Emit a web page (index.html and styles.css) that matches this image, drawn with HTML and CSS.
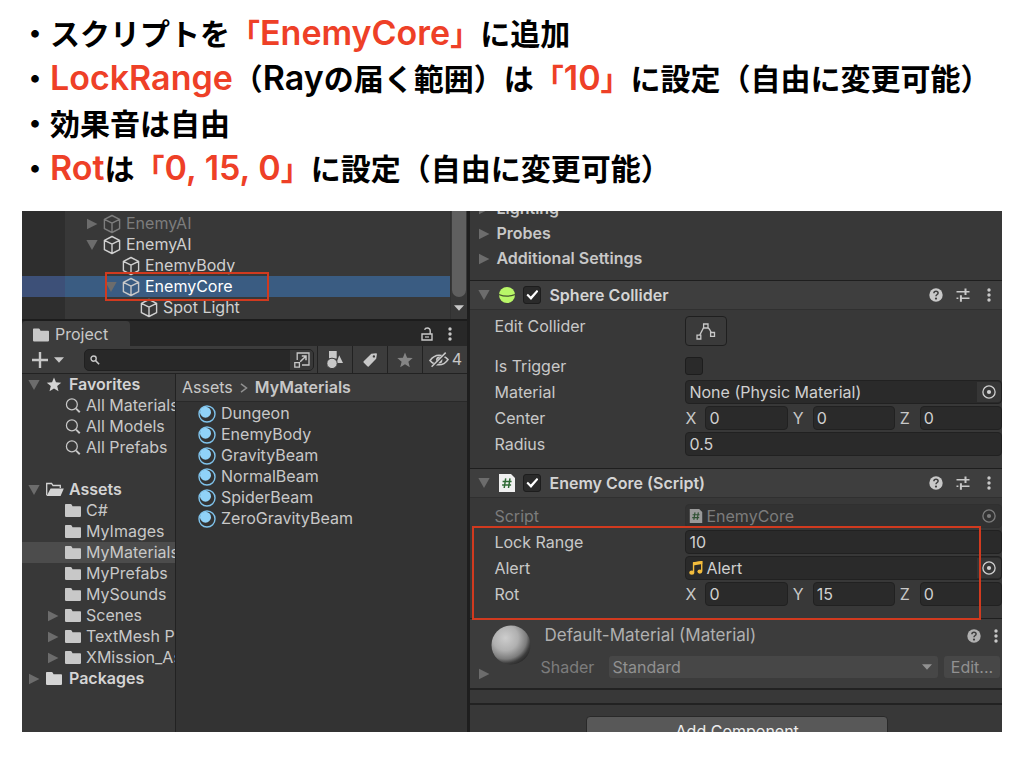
FILE: index.html
```html
<!DOCTYPE html>
<html lang="ja">
<head>
<meta charset="utf-8">
<title>EnemyCore の設定</title>
<link rel="stylesheet" href="styles.css">
</head>
<body>
<svg class="symbols" aria-hidden="true">
  <symbol id="cube" viewBox="0 0 18 20"><path d="M9 1.5 16.6 5.3V14.7L9 18.5 1.4 14.7V5.3ZM1.4 5.3 9 9.2 16.6 5.3M9 9.2V18.5" fill="none" stroke="currentColor" stroke-width="1.4" stroke-linejoin="round"/></symbol>
  <symbol id="right" viewBox="0 0 12 12"><path d="M1 .8 11.4 6 1 11.2Z" fill="currentColor"/></symbol>
  <symbol id="down" viewBox="0 0 12 12"><path d="M.4 1H11.6L6 11Z" fill="currentColor"/></symbol>
  <symbol id="caret" viewBox="0 0 10 6"><path d="M0 .3H10L5 5.8Z" fill="currentColor"/></symbol>
  <symbol id="folder" viewBox="0 0 16 14"><path d="M0 1.2Q0 .4.8.4H5.6Q6.4.4 6.8 1.2L7.5 2.8H15.2Q16 2.8 16 3.6V12.6Q16 13.4 15.2 13.4H.8Q0 13.4 0 12.6Z" fill="currentColor"/></symbol>
  <symbol id="folder-open" viewBox="0 0 18 14"><path d="M.7 12.7V1H5.6L7 3H14.3V5.6" fill="none" stroke="currentColor" stroke-width="1.3"/><path d="M4.6 6H17.8L14.6 13.4H.6Z" fill="currentColor"/></symbol>
  <symbol id="star" viewBox="0 0 16 16"><path d="M8 .6 10.1 5.7 15.7 6.1 11.4 9.7 12.8 15.2 8 12.2 3.2 15.2 4.6 9.7.3 6.1 5.9 5.7Z" fill="currentColor"/></symbol>
  <symbol id="search" viewBox="0 0 16 16"><circle cx="6.8" cy="6.8" r="5.8" fill="none" stroke="currentColor" stroke-width="1.3"/><path d="m11.3 11.3 3.9 3.9" stroke="currentColor" stroke-width="2"/></symbol>
  <symbol id="find" viewBox="0 0 10 10"><circle cx="3.6" cy="3.6" r="2.6" fill="none" stroke="currentColor" stroke-width="1.4"/><path d="m5.5 5.5 3.6 3.7" stroke="currentColor" stroke-width="1.6"/></symbol>
  <symbol id="material" viewBox="0 0 18 18"><circle cx="9" cy="9" r="8" fill="none" stroke="#7fc3ec" stroke-width="1.4"/><circle cx="7.5" cy="7.2" r="5.5" fill="#90d2f8"/></symbol>
  <symbol id="plus" viewBox="0 0 16 16"><path d="M8 0V16M0 8H16" stroke="currentColor" stroke-width="2.4"/></symbol>
  <symbol id="open-in" viewBox="0 0 16 16"><path d="M3.2 8V1H15V13H8" fill="none" stroke="currentColor" stroke-width="1.3"/><path d="M.8 10.7H5.4V15.2H.8Z" fill="none" stroke="currentColor" stroke-width="1.3"/><path d="M6.2 9.7 12 4M7.8 4H12V8.2" fill="none" stroke="currentColor" stroke-width="1.5"/></symbol>
  <symbol id="shapes" viewBox="0 0 16 18"><path d="M2 0H9.7V7.4H2ZM12.2 4.3 16 12H9.5Z" fill="currentColor"/><circle cx="5" cy="12.4" r="5.2" fill="currentColor" stroke="#3c3c3c"/></symbol>
  <symbol id="tag" viewBox="0 0 14 14"><path fill-rule="evenodd" d="M8.3.7 13.2.3Q14 .4 13.9 1.2L13.2 5.8 5.7 13.5Q5 14 4.3 13.3L.6 9.6Q0 8.9.7 8.2ZM10.9 2.2A1.2 1.2 0 1 0 10.9 4.6 1.2 1.2 0 1 0 10.9 2.2Z" fill="currentColor"/></symbol>
  <symbol id="hidden" viewBox="0 0 20 16"><path d="M1 8.4Q5 3.2 10 3.2T19 7.6Q15.5 12.8 10 12.8T1 8.4Z" fill="none" stroke="currentColor" stroke-width="1.6"/><ellipse cx="10.2" cy="8" rx="3.2" ry="3.6" fill="currentColor"/><path d="M3.2 15.4 17.3.8" stroke="#3c3c3c" stroke-width="3"/><path d="M2.6 14.7 16.7.6" stroke="currentColor" stroke-width="1.5"/></symbol>
  <symbol id="lock" viewBox="0 0 12 14"><path d="M1 7H11V13H1ZM9.2 7V3.7Q9.2 1 6.3 1 4.2 1 3.6 2.8" fill="none" stroke="currentColor" stroke-width="1.4"/><path d="M4 10H8" stroke="currentColor" stroke-width="1.2"/></symbol>
  <symbol id="dots" viewBox="0 0 4 14"><circle cx="2" cy="2" r="1.7" fill="currentColor"/><circle cx="2" cy="7" r="1.7" fill="currentColor"/><circle cx="2" cy="12" r="1.7" fill="currentColor"/></symbol>
  <symbol id="help" viewBox="0 0 14 14"><circle cx="7" cy="7" r="6.7" fill="currentColor"/><path d="M4.9 5.2Q4.9 3.2 7 3.2T9.1 5.1Q9.1 6.1 8 6.7 7 7.2 7 8.3" fill="none" stroke="#3e3e3e" stroke-width="1.5"/><circle cx="7" cy="10.6" r="1.1" fill="#3e3e3e"/></symbol>
  <symbol id="sliders" viewBox="0 0 14 14"><path d="M.5 3.7H8M11 3.7H13.5M.5 10.2H2.4M5 10.2H13.5M8 3.7H11" stroke="currentColor" stroke-width="1.5"/><path d="M9.5.5V7M4.9 7.2V13.7" stroke="currentColor" stroke-width="2"/></symbol>
  <symbol id="picker" viewBox="0 0 14 14"><circle cx="7" cy="7" r="6.1" fill="none" stroke="currentColor" stroke-width="1.3"/><circle cx="7" cy="7" r="2.1" fill="currentColor"/></symbol>
  <symbol id="sphere" viewBox="0 0 16 16"><circle cx="8" cy="8" r="8" fill="#b9f768"/><path d="M0 7.6Q8 10.8 16 7.6" fill="none" stroke="#44532f" stroke-width="1.2"/></symbol>
  <symbol id="script" viewBox="0 0 16 18"><path d="M0 0H12L16 4V18H0Z" fill="#f0f0f0"/><path d="M6.7 4.3 5.2 14M11 4.3 9.5 14M3.6 7.4H12.6M3.1 11H12.1" stroke="#2f6b35" stroke-width="1.5"/></symbol>
  <symbol id="edit-shape" viewBox="0 0 20 17"><path d="M3.8 12 7.5 4.7M12.2 4.7Q14 6.2 15.3 9.8" fill="none" stroke="currentColor" stroke-width="1.4"/><path d="M1 12.2H4.8V16H1ZM7.6 1H12V5H7.6ZM14.6 9.5H18.5V13.4H14.6Z" fill="none" stroke="currentColor" stroke-width="1.3"/></symbol>
  <symbol id="note" viewBox="0 0 12 12"><path d="M3.9 9.7V1.6L10.9.6V8.5" fill="none" stroke="#f4bd3c" stroke-width="1.2"/><path d="M3.5 1.2 11.4.1V2.6L3.5 3.8Z" fill="#f4bd3c"/><ellipse cx="2.4" cy="10" rx="2.2" ry="1.8" fill="#f4bd3c"/><ellipse cx="9.3" cy="9.1" rx="2.1" ry="1.8" fill="#f4bd3c"/></symbol>
</svg>

<ul class="notes">
  <li>・スクリプトを<em>「<span class="latin">EnemyCore</span>」</em>に追加</li>
  <li>・<em class="latin">LockRange</em>（<span class="latin">Ray</span>の届く範囲）は<em>「<span class="latin">10</span>」</em>に設定（自由に変更可能）</li>
  <li>・効果音は自由</li>
  <li>・<em class="latin">Rot</em>は<em>「<span class="latin">0, 15, 0</span>」</em>に設定（自由に変更可能）</li>
</ul>

<main class="editor">
  <div class="left">
    <section class="hierarchy">
      <ul class="nodes">
        <li class="node dim"><svg class="arrow"><use href="#right"/></svg><svg class="cube"><use href="#cube"/></svg>EnemyAI</li>
        <li class="node"><svg class="arrow"><use href="#down"/></svg><svg class="cube"><use href="#cube"/></svg>EnemyAI</li>
        <li class="node level-2"><span class="arrow"></span><svg class="cube"><use href="#cube"/></svg>EnemyBody</li>
        <li class="node level-2 selected"><svg class="arrow"><use href="#down"/></svg><svg class="cube"><use href="#cube"/></svg>EnemyCore<span class="mark mark-node"></span></li>
        <li class="node level-3"><span class="arrow"></span><svg class="cube"><use href="#cube"/></svg>Spot Light</li>
      </ul>
      <div class="scroll"><div class="thumb"></div><svg class="caret"><use href="#caret"/></svg></div>
    </section>

    <section class="project">
      <div class="tabs">
        <div class="tab"><svg class="folder"><use href="#folder"/></svg>Project</div>
        <svg class="lock"><use href="#lock"/></svg><svg class="dots"><use href="#dots"/></svg>
      </div>
      <div class="toolbar">
        <button class="add" aria-label="Create"><svg class="plus"><use href="#plus"/></svg><svg class="caret"><use href="#caret"/></svg></button>
        <div class="search"><svg class="find"><use href="#find"/></svg><input type="text" aria-label="Search"><button class="open-in" aria-label="Open search"><svg><use href="#open-in"/></svg></button></div>
        <button class="tool" aria-label="Filter by type"><svg class="shapes"><use href="#shapes"/></svg></button>
        <button class="tool" aria-label="Filter by label"><svg class="tag"><use href="#tag"/></svg></button>
        <button class="tool faded" aria-label="Favorite"><svg class="star"><use href="#star"/></svg></button>
        <button class="tool wide" aria-label="Hidden packages"><svg class="hidden"><use href="#hidden"/></svg>4</button>
      </div>
      <div class="panes">
        <ul class="folders">
          <li class="root"><svg class="arrow"><use href="#down"/></svg><svg class="glyph"><use href="#star"/></svg>Favorites</li>
          <li class="entry"><span class="arrow"></span><svg class="glyph"><use href="#search"/></svg>All Materials</li>
          <li class="entry"><span class="arrow"></span><svg class="glyph"><use href="#search"/></svg>All Models</li>
          <li class="entry"><span class="arrow"></span><svg class="glyph"><use href="#search"/></svg>All Prefabs</li>
          <li class="root spaced"><svg class="arrow"><use href="#down"/></svg><svg class="glyph glyph-wide"><use href="#folder-open"/></svg>Assets</li>
          <li class="entry"><span class="arrow"></span><svg class="glyph"><use href="#folder"/></svg>C#</li>
          <li class="entry"><span class="arrow"></span><svg class="glyph"><use href="#folder"/></svg>MyImages</li>
          <li class="entry current"><span class="arrow"></span><svg class="glyph"><use href="#folder"/></svg>MyMaterials</li>
          <li class="entry"><span class="arrow"></span><svg class="glyph"><use href="#folder"/></svg>MyPrefabs</li>
          <li class="entry"><span class="arrow"></span><svg class="glyph"><use href="#folder"/></svg>MySounds</li>
          <li class="entry"><svg class="arrow"><use href="#right"/></svg><svg class="glyph"><use href="#folder"/></svg>Scenes</li>
          <li class="entry"><svg class="arrow"><use href="#right"/></svg><svg class="glyph"><use href="#folder"/></svg>TextMesh Pro</li>
          <li class="entry"><svg class="arrow"><use href="#right"/></svg><svg class="glyph"><use href="#folder"/></svg>XMission_Assets</li>
          <li class="root"><svg class="arrow"><use href="#right"/></svg><svg class="glyph"><use href="#folder"/></svg>Packages</li>
        </ul>
        <div class="files">
          <div class="crumbs"><span>Assets</span><svg class="chevron" viewBox="0 0 8 10"><path d="M1 .8 6.5 5 1 9.2" fill="none" stroke="currentColor" stroke-width="1.5"/></svg><b>MyMaterials</b></div>
          <ul>
            <li><svg class="ball"><use href="#material"/></svg>Dungeon</li>
            <li><svg class="ball"><use href="#material"/></svg>EnemyBody</li>
            <li><svg class="ball"><use href="#material"/></svg>GravityBeam</li>
            <li><svg class="ball"><use href="#material"/></svg>NormalBeam</li>
            <li><svg class="ball"><use href="#material"/></svg>SpiderBeam</li>
            <li><svg class="ball"><use href="#material"/></svg>ZeroGravityBeam</li>
          </ul>
        </div>
      </div>
    </section>
  </div>

  <div class="inspector">
    <ul class="foldouts">
      <li><svg class="arrow"><use href="#right"/></svg>Lighting</li>
      <li><svg class="arrow"><use href="#right"/></svg>Probes</li>
      <li><svg class="arrow"><use href="#right"/></svg>Additional Settings</li>
    </ul>

    <section class="component">
      <header>
        <svg class="arrow"><use href="#down"/></svg><svg class="kind"><use href="#sphere"/></svg>
        <input class="check" type="checkbox" id="collider-on" checked><label class="title" for="collider-on">Sphere Collider</label>
        <svg class="help"><use href="#help"/></svg><svg class="sliders"><use href="#sliders"/></svg><svg class="dots"><use href="#dots"/></svg>
      </header>
      <div class="props">
        <div class="prop tall"><span>Edit Collider</span><button class="shape" aria-label="Edit Collider"><svg><use href="#edit-shape"/></svg></button></div>
        <div class="prop"><label for="trigger">Is Trigger</label><input class="check" type="checkbox" id="trigger"></div>
        <div class="prop"><span>Material</span><div class="field object"><span>None (Physic Material)</span><button aria-label="Pick material"><svg><use href="#picker"/></svg></button></div></div>
        <div class="prop"><span>Center</span><div class="vector">
          <label for="cx">X</label><input class="field" id="cx" value="0"><label for="cy">Y</label><input class="field" id="cy" value="0"><label for="cz">Z</label><input class="field" id="cz" value="0"></div></div>
        <div class="prop"><label for="radius">Radius</label><input class="field" id="radius" value="0.5"></div>
      </div>
    </section>

    <section class="component">
      <header>
        <svg class="arrow"><use href="#down"/></svg><svg class="kind"><use href="#script"/></svg>
        <input class="check" type="checkbox" id="core-on" checked><label class="title" for="core-on">Enemy Core (Script)</label>
        <svg class="help"><use href="#help"/></svg><svg class="sliders"><use href="#sliders"/></svg><svg class="dots"><use href="#dots"/></svg>
      </header>
      <div class="props">
        <div class="prop disabled"><span>Script</span><div class="field object"><svg class="mini"><use href="#script"/></svg><span>EnemyCore</span><button aria-label="Pick script" disabled><svg><use href="#picker"/></svg></button></div></div>
        <div class="marked">
          <div class="prop"><label for="range">Lock Range</label><input class="field" id="range" value="10"></div>
          <div class="prop"><span>Alert</span><div class="field object"><svg class="mini"><use href="#note"/></svg><span>Alert</span><button aria-label="Pick sound"><svg><use href="#picker"/></svg></button></div></div>
          <div class="prop"><span>Rot</span><div class="vector">
            <label for="rx">X</label><input class="field" id="rx" value="0"><label for="ry">Y</label><input class="field" id="ry" value="15"><label for="rz">Z</label><input class="field" id="rz" value="0"></div></div>
          <span class="mark mark-props"></span>
        </div>
      </div>
    </section>

    <section class="surface">
      <svg class="arrow"><use href="#right"/></svg>
      <svg class="preview" viewBox="0 0 40 40">
        <defs><radialGradient id="shade" cx=".36" cy=".32" r=".72"><stop offset="0" stop-color="#cdcdcd"/><stop offset=".45" stop-color="#b0b0b0"/><stop offset=".75" stop-color="#7c7c7c"/><stop offset=".9" stop-color="#3c3c3c"/><stop offset="1" stop-color="#2c2c2c"/></radialGradient></defs>
        <circle cx="20" cy="20" r="19.5" fill="url(#shade)"/>
      </svg>
      <div class="surface-body">
        <div class="surface-title"><span>Default-Material (Material)</span><svg class="help"><use href="#help"/></svg><svg class="dots"><use href="#dots"/></svg></div>
        <div class="shader"><label for="shader">Shader</label><div class="select"><select id="shader" disabled><option>Standard</option></select><svg class="caret"><use href="#caret"/></svg></div><button disabled>Edit...</button></div>
      </div>
    </section>
    <div class="spacer"></div>
    <div class="footer"><button>Add Component</button></div>
  </div>
</main>
</body>
</html>
```
FILE: styles.css
```css
* { box-sizing: border-box; }
body { margin: 0; background: #fff; color: #000; font-family: Inter, "Noto Sans CJK JP", sans-serif; }
ul { list-style: none; margin: 0; padding: 0; }
svg { display: block; flex: none; }
button, input, select { font: inherit; color: inherit; margin: 0; padding: 0; border: 0; background: none; }
button { display: flex; align-items: center; justify-content: center; }
.symbols { position: absolute; width: 0; height: 0; }

.notes { padding: 10px 20px 21px; font-family: "Noto Sans CJK JP", sans-serif; font-size: 30px; font-weight: 700; line-height: 45px; white-space: nowrap; }
.notes li { height: 45px; }
.notes em { font-style: normal; color: #ee4027; }
.notes .latin { font-family: Inter, sans-serif; font-size: 34px; font-weight: 600; line-height: 1; }

.editor { display: grid; grid-template-columns: 5fr 6fr; height: 521px; margin: 0 22px; overflow: hidden; background: #383838; color: #c8c8c8; font-size: 16px; line-height: 21px; white-space: nowrap; }
.left { display: flex; flex-direction: column; min-width: 0; min-height: 0; }
.arrow { width: 12px; height: 12px; flex: none; color: #6c6c6c; }
.caret { width: 10px; height: 6px; }
.dots { width: 4px; height: 14px; color: #c8c8c8; }

.hierarchy { display: flex; height: 110px; overflow: hidden; border-bottom: 2px solid #1c1c1c; }
.nodes { flex: 1; padding-top: 2px; background: linear-gradient(90deg, #2e2e2e 43px, #383838 43px); }
.node { position: relative; display: flex; align-items: center; height: 21px; padding-left: 64px; color: #d0d0d0; }
.node .cube { width: 18px; height: 20px; margin: 0 5px; }
.level-2 { padding-left: 83px; }
.level-3 { padding-left: 101px; }
.node.dim { color: #7d7d7d; }
.node.selected { background: linear-gradient(90deg, #3d5078 43px, #3a5c82 43px); color: #fff; }
.selected .cube { color: #c8c8c8; }
.mark { position: absolute; border: 2px solid #d13a1f; pointer-events: none; }
.mark-node { left: 83px; width: 164px; top: -4px; bottom: -4px; z-index: 1; }
.scroll { display: flex; flex-direction: column; align-items: center; width: 17px; border-left: 1px solid #313131; color: #c8c8c8; }
.thumb { width: 14px; height: 86px; margin-bottom: 8px; border-radius: 0 0 7px 7px; background: #5f5f5f; }

.project { display: flex; flex: 1; flex-direction: column; min-height: 0; }
.tabs { display: flex; align-items: center; height: 25px; padding-right: 15px; background: #282828; }
.tab { display: flex; align-items: center; gap: 6px; flex: 0 0 108px; height: 25px; margin-right: auto; padding: 2px 0 0 11px; border-radius: 4px 4px 0 0; background: #3c3c3c; }
.folder { width: 16px; height: 14px; }
.lock { width: 12px; height: 14px; margin-right: 15px; }
.toolbar { display: flex; align-items: center; height: 28px; background: #3c3c3c; border-bottom: 1px solid #222; }
.add { gap: 6px; padding: 0 20px 0 10px; }
.plus { width: 16px; height: 16px; }
.search { display: flex; align-items: center; flex: 1; min-width: 0; height: 22px; margin-right: 3px; padding-left: 5px; border: 1px solid #202020; border-radius: 5px; background: #282828; }
.search input { flex: 1; min-width: 0; }
.find { width: 10px; height: 10px; }
.open-in { width: 23px; height: 20px; background: #383838; border-radius: 0 4px 4px 0; }
.open-in svg { width: 16px; height: 16px; }
.tool { flex: 0 0 35px; height: 27px; border-left: 1px solid #222; }
.tool.wide { flex-basis: 45px; gap: 3px; }
.shapes { width: 16px; height: 18px; }
.tag { width: 14px; height: 14px; }
.star { width: 16px; height: 16px; }
.faded { color: #858585; }
.hidden { width: 20px; height: 16px; }

.panes { display: flex; flex: 1; min-height: 0; }
.folders { flex: 0 0 154px; overflow: hidden; border-right: 1px solid #222; }
.folders li { display: flex; align-items: center; height: 21px; }
.root { padding-left: 6px; font-weight: 600; color: #d4d4d4; }
.root .arrow { margin-right: 6px; }
.entry { padding-left: 25px; }
.entry .arrow { margin-right: 6px; }
.glyph { width: 16px; height: 15px; margin-right: 5px; }
.root .glyph { margin-right: 7px; }
.root .glyph-wide { width: 18px; margin-right: 5px; }
.folders .spaced { margin-top: 21px; }
.current { background: #4c4c4c; }
.files { flex: 1; min-width: 0; background: #333; }
.files ul { padding-top: 1px; }
.crumbs { display: flex; align-items: center; gap: 7px; height: 28px; padding-left: 6px; border-bottom: 1px solid #292929; background: #3c3c3c; }
.crumbs b { font-weight: 600; }
.chevron { width: 8px; height: 10px; color: #909090; }
.files li { display: flex; align-items: center; gap: 5px; height: 21px; padding-left: 22px; }
.ball { width: 18px; height: 18px; }

.inspector { min-width: 0; border-left: 3px solid #1e1e1e; }
.foldouts { margin-top: -15px; padding-bottom: 9px; font-weight: 600; }
.foldouts li { display: flex; align-items: center; gap: 6px; height: 25px; padding-left: 8px; }
.component { border-top: 1px solid #1e1e1e; }
.component header { display: flex; align-items: center; height: 29px; padding: 0 11px 0 8px; border-bottom: 1px solid #303030; background: #3e3e3e; }
.kind { width: 16px; height: 18px; margin: 0 8px 0 9px; }
.title { flex: 1; margin-left: 8px; font-weight: 600; color: #d4d4d4; }
.help { width: 14px; height: 14px; margin-right: 13px; }
.sliders { width: 14px; height: 14px; margin-right: 17px; }
.check { appearance: none; display: grid; place-items: center; width: 18px; height: 18px; border: 1px solid #1d1d1d; border-radius: 3px; background: #2a2a2a; }
.check:checked::before { content: ""; width: 12px; height: 10px; background: #fff; clip-path: polygon(0 52%, 12% 38%, 36% 66%, 86% 0, 100% 12%, 38% 100%); }
.props { display: grid; gap: 2px; padding: 6px 0 12px 24px; }
.prop { display: grid; grid-template-columns: 191px 1fr; align-items: center; height: 24px; }
.tall { align-items: start; height: 36px; }
.shape { width: 42px; height: 30px; border: 1px solid #1f1f1f; border-radius: 4px; background: #3a3a3a; }
.shape svg { width: 20px; height: 17px; }
.field { width: 100%; min-width: 0; height: 24px; padding-left: 3px; border: 1px solid #212121; border-radius: 4px; background: #2a2a2a; color: #d0d0d0; }
.object { display: flex; align-items: center; gap: 3px; }
.object button { width: 24px; height: 20px; margin-left: auto; border-radius: 0 3px 3px 0; background: #363636; }
.object button svg { width: 14px; height: 14px; }
.mini { width: 14px; height: 14px; }
.vector { display: grid; grid-template-columns: 15px 1fr 15px 1fr 15px 1fr; column-gap: 5px; align-items: center; }
.disabled, .disabled .field { color: #7c7c7c; }
.disabled .field { border-color: #303030; background: #323232; }
.disabled button { background: none; }
.disabled .mini { opacity: .55; }
.marked { position: relative; display: grid; gap: 2px; }
.mark-props { left: -22px; right: 21px; top: -4px; bottom: -14px; }

.surface { display: grid; grid-template-columns: 12px 40px 1fr; height: 72px; padding: 6px 2px 8px 8px; border-top: 1px solid #1e1e1e; border-bottom: 2px solid #222; background: #3c3c3c; color: #b0b0b0; }
.surface > .arrow { align-self: end; }
.preview { width: 40px; height: 40px; margin-left: 1px; }
.surface-body { display: grid; align-content: start; gap: 10px; margin-left: 10px; }
.surface-title { display: flex; align-items: center; padding-left: 4px; font-size: 17px; }
.surface-title span { flex: 1; }
.surface-title .dots { margin-right: 2px; }
.shader { display: flex; align-items: center; gap: 6px; color: #7c7c7c; }
.shader label { flex: 0 0 63px; }
.select { display: flex; align-items: center; flex: 1; height: 22px; padding: 0 6px 0 3px; border-radius: 3px; background: #474747; color: #919191; }
.select select { appearance: none; flex: 1; opacity: 1; }
.shader button { flex: 0 0 56px; height: 22px; border-radius: 3px; background: #474747; color: #919191; }
.spacer { height: 15px; border-bottom: 2px solid #222; }
.footer { display: flex; justify-content: center; padding: 11px 0 0 2px; }
.footer button { flex: 0 0 302px; height: 30px; border: 1px solid #292929; border-radius: 4px; background: #585858; color: #eee; }
```
